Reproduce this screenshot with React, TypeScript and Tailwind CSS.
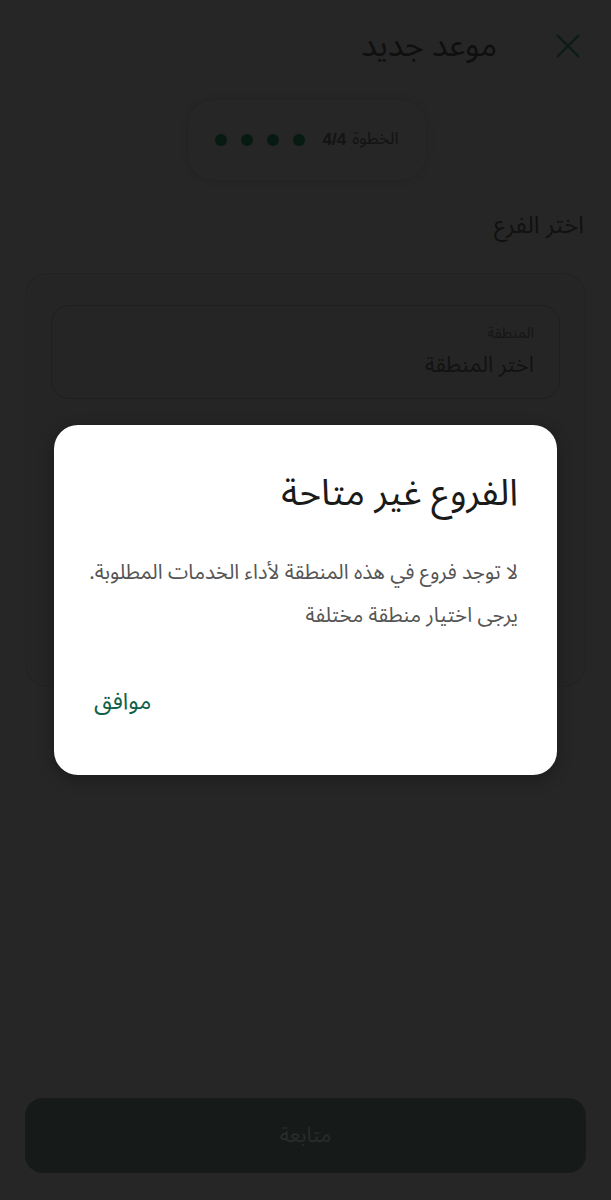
import React from "react";

const AR = { fontFamily: '"Noto Sans Arabic", "Noto Naskh Arabic", "DejaVu Sans", "Noto Sans", sans-serif' };

export default function App() {
  return (
    <div dir="rtl" style={AR} className="relative h-[1200px] w-full bg-[#262626] flex flex-col overflow-hidden">
      {/* Header */}
      <div className="flex items-center h-[92px] pr-[114px] pl-[25px] relative">
        <div className="text-[32px] text-[#0f0f0f] leading-none">موعد جديد</div>
        <button className="absolute right-[30px] top-[33px] w-[26px] h-[26px] flex items-center justify-center">
          <svg width="26" height="26" viewBox="0 0 26 26" fill="none" stroke="#0b1c15" strokeWidth="2.2">
            <path d="M2 2 L24 24 M24 2 L2 24" />
          </svg>
        </button>
      </div>

      {/* Step pill */}
      <div className="flex justify-center mt-[8px] pl-[2px]">
        <div className="w-[238px] h-[80px] rounded-[26px] bg-[#262626] shadow-[0_0_8px_rgba(0,0,0,0.12)] flex items-center justify-center gap-[18px]">
          <span className="text-[17px] text-[#131313] flex items-center gap-[6px]">
            <span>الخطوة</span>
            <span className="font-bold text-[17px]" style={{ fontFamily: '"Liberation Sans", sans-serif' }}>4/4</span>
          </span>
          <div className="flex gap-[14px]" dir="ltr">
            {[0, 1, 2, 3].map((i) => (
              <span key={i} className="w-[12px] h-[12px] rounded-full bg-[#071a12]" />
            ))}
          </div>
        </div>
      </div>

      {/* Section title */}
      <div className="pr-[27px] mt-[34px] text-[24px] text-[#111111] leading-none">اختر الفرع</div>

      {/* Card */}
      <div className="mx-[25px] mt-[35px] h-[414px] rounded-[22px] border border-[#222222] bg-[#252525] px-[25px] pt-[31px]">
        <div className="h-[94px] rounded-[18px] border border-[#1f1f1f] px-[25px] pt-[19px] flex flex-col gap-[10px]">
          <div className="text-[15px] text-[#161616] leading-[16px]">المنطقة</div>
          <div className="text-[22px] text-[#121212] leading-[28px]">اختر المنطقة</div>
        </div>
      </div>

      <div className="flex-1" />

      {/* Bottom button */}
      <div className="mx-[25px] mb-[27px] h-[75px] rounded-[18px] bg-[#161a18] flex items-center justify-center">
        <span className="text-[21px] text-[#2a2c2b]">متابعة</span>
      </div>

      {/* Dialog overlay */}
      <div className="absolute inset-0 flex items-center justify-center">
        <div className="w-[503px] h-[350px] rounded-[24px] bg-white shadow-[0_4px_16px_rgba(0,0,0,0.3)] pr-[39px] pl-[16px] pt-[45px] flex flex-col">
          <div className="text-[37px] text-[#1a1a1a] leading-tight whitespace-nowrap">الفروع غير متاحة</div>
          <div className="mt-[35px] text-[20.5px] text-[#555555] leading-[43px] whitespace-nowrap">
            <div>لا توجد فروع في هذه المنطقة لأداء الخدمات المطلوبة.</div>
            <div>يرجى اختيار منطقة مختلفة</div>
          </div>
          <div className="flex-1" />
          <div className="flex justify-end pb-[62px] pl-[24px]">
            <span className="text-[23px] text-[#116148] leading-none">موافق</span>
          </div>
        </div>
      </div>
    </div>
  );
}
